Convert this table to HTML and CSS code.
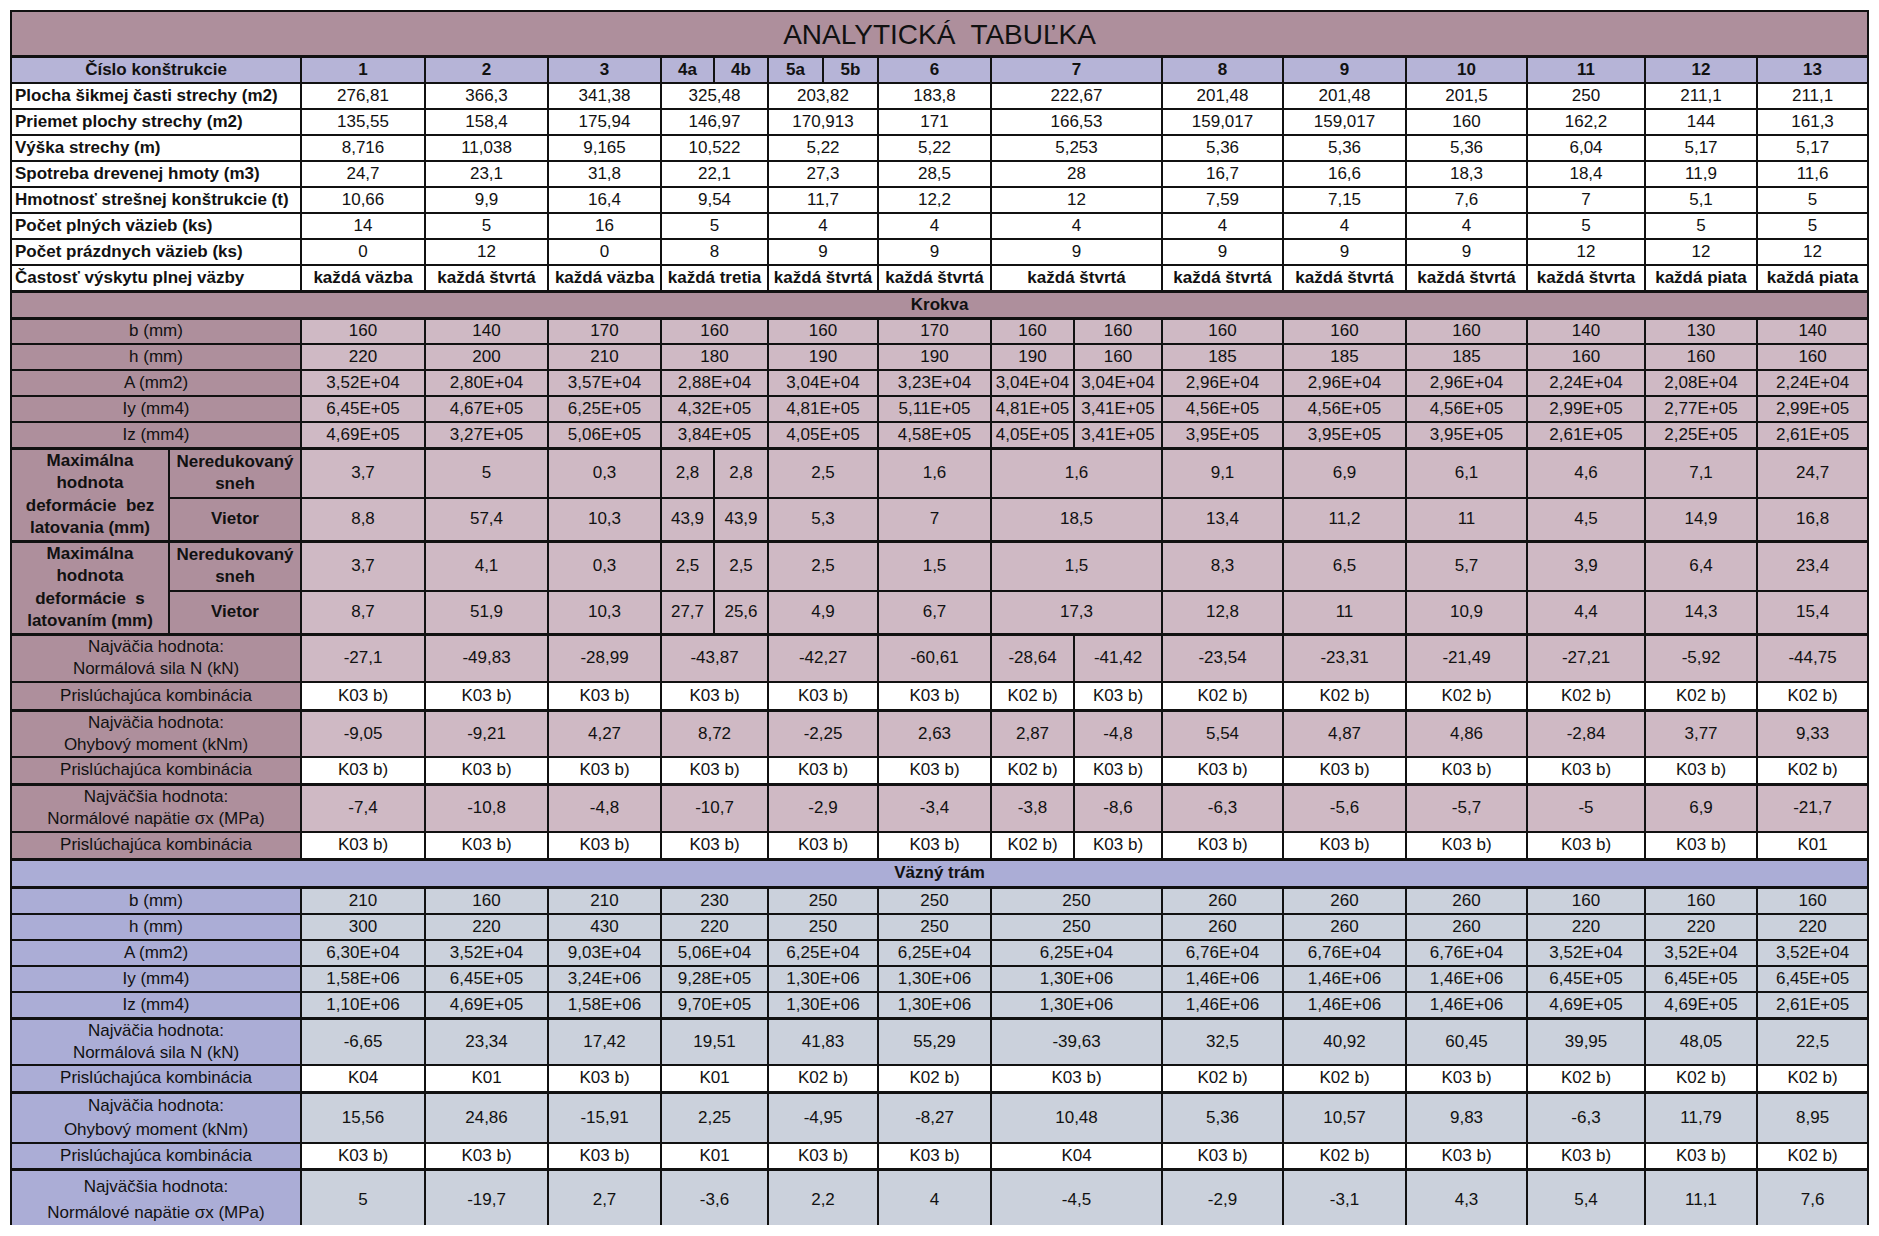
FILE: index.html
```html
<!DOCTYPE html>
<html lang="sk">
<head>
<meta charset="utf-8">
<title>Analytická tabuľka</title>
<link rel="stylesheet" href="styles.css">
</head>
<body>
<div class="page">
<table class="sheet">
<colgroup>
<col class="c158"><col class="c132"><col class="c124"><col class="c123"><col class="c113"><col class="c53"><col class="c54"><col class="c55"><col class="c55"><col class="c113"><col class="c83"><col class="c88"><col class="c121"><col class="c123"><col class="c121"><col class="c118"><col class="c112"><col class="c111">
</colgroup>
<tbody>
<tr class="title h45 thick"><td colspan="18">ANALYTICKÁ&nbsp; TABUĽKA</td></tr>
<tr class="hdr h27"><td colspan="2">Číslo konštrukcie</td><td>1</td><td>2</td><td>3</td><td class="split">4a</td><td>4b</td><td class="split">5a</td><td>5b</td><td>6</td><td colspan="2">7</td><td>8</td><td>9</td><td>10</td><td>11</td><td>12</td><td>13</td></tr>

<tr class="top h26"><td colspan="2" class="ll">Plocha šikmej časti strechy (m2)</td><td>276,81</td><td>366,3</td><td>341,38</td><td colspan="2">325,48</td><td colspan="2">203,82</td><td>183,8</td><td colspan="2">222,67</td><td>201,48</td><td>201,48</td><td>201,5</td><td>250</td><td>211,1</td><td>211,1</td></tr>
<tr class="top h26"><td colspan="2" class="ll">Priemet plochy strechy (m2)</td><td>135,55</td><td>158,4</td><td>175,94</td><td colspan="2">146,97</td><td colspan="2">170,913</td><td>171</td><td colspan="2">166,53</td><td>159,017</td><td>159,017</td><td>160</td><td>162,2</td><td>144</td><td>161,3</td></tr>
<tr class="top h26"><td colspan="2" class="ll">Výška strechy (m)</td><td>8,716</td><td>11,038</td><td>9,165</td><td colspan="2">10,522</td><td colspan="2">5,22</td><td>5,22</td><td colspan="2">5,253</td><td>5,36</td><td>5,36</td><td>5,36</td><td>6,04</td><td>5,17</td><td>5,17</td></tr>
<tr class="top h26"><td colspan="2" class="ll">Spotreba drevenej hmoty (m3)</td><td>24,7</td><td>23,1</td><td>31,8</td><td colspan="2">22,1</td><td colspan="2">27,3</td><td>28,5</td><td colspan="2">28</td><td>16,7</td><td>16,6</td><td>18,3</td><td>18,4</td><td>11,9</td><td>11,6</td></tr>
<tr class="top h26"><td colspan="2" class="ll">Hmotnosť strešnej konštrukcie (t)</td><td>10,66</td><td>9,9</td><td>16,4</td><td colspan="2">9,54</td><td colspan="2">11,7</td><td>12,2</td><td colspan="2">12</td><td>7,59</td><td>7,15</td><td>7,6</td><td>7</td><td>5,1</td><td>5</td></tr>
<tr class="top h26"><td colspan="2" class="ll">Počet plných väzieb (ks)</td><td>14</td><td>5</td><td>16</td><td colspan="2">5</td><td colspan="2">4</td><td>4</td><td colspan="2">4</td><td>4</td><td>4</td><td>4</td><td>5</td><td>5</td><td>5</td></tr>
<tr class="top h26"><td colspan="2" class="ll">Počet prázdnych väzieb (ks)</td><td>0</td><td>12</td><td>0</td><td colspan="2">8</td><td colspan="2">9</td><td>9</td><td colspan="2">9</td><td>9</td><td>9</td><td>9</td><td>12</td><td>12</td><td>12</td></tr>
<tr class="top bold h26 thick"><td colspan="2" class="ll">Častosť výskytu plnej väzby</td><td>každá väzba</td><td>každá štvrtá</td><td>každá väzba</td><td colspan="2">každá tretia</td><td colspan="2">každá štvrtá</td><td>každá štvrtá</td><td colspan="2">každá štvrtá</td><td>každá štvrtá</td><td>každá štvrtá</td><td>každá štvrtá</td><td>každá štvrta</td><td>každá piata</td><td>každá piata</td></tr>

<tr class="sec kr h27 thick"><td colspan="18">Krokva</td></tr>
<tr class="kr h26"><td colspan="2" class="lab">b (mm)</td><td>160</td><td>140</td><td>170</td><td colspan="2">160</td><td colspan="2">160</td><td>170</td><td>160</td><td>160</td><td>160</td><td>160</td><td>160</td><td>140</td><td>130</td><td>140</td></tr>
<tr class="kr h26"><td colspan="2" class="lab">h (mm)</td><td>220</td><td>200</td><td>210</td><td colspan="2">180</td><td colspan="2">190</td><td>190</td><td>190</td><td>160</td><td>185</td><td>185</td><td>185</td><td>160</td><td>160</td><td>160</td></tr>
<tr class="kr h26"><td colspan="2" class="lab">A (mm2)</td><td>3,52E+04</td><td>2,80E+04</td><td>3,57E+04</td><td colspan="2">2,88E+04</td><td colspan="2">3,04E+04</td><td>3,23E+04</td><td>3,04E+04</td><td>3,04E+04</td><td>2,96E+04</td><td>2,96E+04</td><td>2,96E+04</td><td>2,24E+04</td><td>2,08E+04</td><td>2,24E+04</td></tr>
<tr class="kr h26"><td colspan="2" class="lab">Iy (mm4)</td><td>6,45E+05</td><td>4,67E+05</td><td>6,25E+05</td><td colspan="2">4,32E+05</td><td colspan="2">4,81E+05</td><td>5,11E+05</td><td>4,81E+05</td><td>3,41E+05</td><td>4,56E+05</td><td>4,56E+05</td><td>4,56E+05</td><td>2,99E+05</td><td>2,77E+05</td><td>2,99E+05</td></tr>
<tr class="kr h26 thick"><td colspan="2" class="lab">Iz (mm4)</td><td>4,69E+05</td><td>3,27E+05</td><td>5,06E+05</td><td colspan="2">3,84E+05</td><td colspan="2">4,05E+05</td><td>4,58E+05</td><td>4,05E+05</td><td>3,41E+05</td><td>3,95E+05</td><td>3,95E+05</td><td>3,95E+05</td><td>2,61E+05</td><td>2,25E+05</td><td>2,61E+05</td></tr>

<tr class="kr h50"><td rowspan="2" class="lab def thickb"><div class="clip">Maximálna<br>hodnota<br>deformácie&nbsp; bez<br>latovania (mm)</div></td><td class="lab def2">Neredukovaný<br>sneh</td><td>3,7</td><td>5</td><td>0,3</td><td class="split">2,8</td><td>2,8</td><td colspan="2">2,5</td><td>1,6</td><td colspan="2">1,6</td><td>9,1</td><td>6,9</td><td>6,1</td><td>4,6</td><td>7,1</td><td>24,7</td></tr>
<tr class="kr h43 thick"><td class="lab def2">Vietor</td><td>8,8</td><td>57,4</td><td>10,3</td><td class="split">43,9</td><td>43,9</td><td colspan="2">5,3</td><td>7</td><td colspan="2">18,5</td><td>13,4</td><td>11,2</td><td>11</td><td>4,5</td><td>14,9</td><td>16,8</td></tr>
<tr class="kr h50"><td rowspan="2" class="lab def thickb"><div class="clip">Maximálna<br>hodnota<br>deformácie&nbsp; s<br>latovaním (mm)</div></td><td class="lab def2">Neredukovaný<br>sneh</td><td>3,7</td><td>4,1</td><td>0,3</td><td class="split">2,5</td><td>2,5</td><td colspan="2">2,5</td><td>1,5</td><td colspan="2">1,5</td><td>8,3</td><td>6,5</td><td>5,7</td><td>3,9</td><td>6,4</td><td>23,4</td></tr>
<tr class="kr h43 thick"><td class="lab def2">Vietor</td><td>8,7</td><td>51,9</td><td>10,3</td><td class="split">27,7</td><td>25,6</td><td colspan="2">4,9</td><td>6,7</td><td colspan="2">17,3</td><td>12,8</td><td>11</td><td>10,9</td><td>4,4</td><td>14,3</td><td>15,4</td></tr>

<tr class="kr h48"><td colspan="2" class="lab"><div class="two">Najväčia hodnota:<br>Normálová sila N (kN)</div></td><td>-27,1</td><td>-49,83</td><td>-28,99</td><td colspan="2">-43,87</td><td colspan="2">-42,27</td><td>-60,61</td><td>-28,64</td><td>-41,42</td><td>-23,54</td><td>-23,31</td><td>-21,49</td><td>-27,21</td><td>-5,92</td><td>-44,75</td></tr>
<tr class="kr comb h28 thick"><td colspan="2" class="lab">Prislúchajúca kombinácia</td><td>K03 b)</td><td>K03 b)</td><td>K03 b)</td><td colspan="2">K03 b)</td><td colspan="2">K03 b)</td><td>K03 b)</td><td>K02 b)</td><td>K03 b)</td><td>K02 b)</td><td>K02 b)</td><td>K02 b)</td><td>K02 b)</td><td>K02 b)</td><td>K02 b)</td></tr>
<tr class="kr h47"><td colspan="2" class="lab"><div class="two">Najväčia hodnota:<br>Ohybový moment (kNm)</div></td><td>-9,05</td><td>-9,21</td><td>4,27</td><td colspan="2">8,72</td><td colspan="2">-2,25</td><td>2,63</td><td>2,87</td><td>-4,8</td><td>5,54</td><td>4,87</td><td>4,86</td><td>-2,84</td><td>3,77</td><td>9,33</td></tr>
<tr class="kr comb h27 thick"><td colspan="2" class="lab">Prislúchajúca kombinácia</td><td>K03 b)</td><td>K03 b)</td><td>K03 b)</td><td colspan="2">K03 b)</td><td colspan="2">K03 b)</td><td>K03 b)</td><td>K02 b)</td><td>K03 b)</td><td>K03 b)</td><td>K03 b)</td><td>K03 b)</td><td>K03 b)</td><td>K03 b)</td><td>K02 b)</td></tr>
<tr class="kr h48"><td colspan="2" class="lab"><div class="two">Najväčšia hodnota:<br>Normálové napätie σx (MPa)</div></td><td>-7,4</td><td>-10,8</td><td>-4,8</td><td colspan="2">-10,7</td><td colspan="2">-2,9</td><td>-3,4</td><td>-3,8</td><td>-8,6</td><td>-6,3</td><td>-5,6</td><td>-5,7</td><td>-5</td><td>6,9</td><td>-21,7</td></tr>
<tr class="kr comb h27 thick"><td colspan="2" class="lab">Prislúchajúca kombinácia</td><td>K03 b)</td><td>K03 b)</td><td>K03 b)</td><td colspan="2">K03 b)</td><td colspan="2">K03 b)</td><td>K03 b)</td><td>K02 b)</td><td>K03 b)</td><td>K03 b)</td><td>K03 b)</td><td>K03 b)</td><td>K03 b)</td><td>K03 b)</td><td>K01</td></tr>

<tr class="sec vz h28 thick"><td colspan="18">Väzný trám</td></tr>
<tr class="vz h27"><td colspan="2" class="lab">b (mm)</td><td>210</td><td>160</td><td>210</td><td colspan="2">230</td><td colspan="2">250</td><td>250</td><td colspan="2">250</td><td>260</td><td>260</td><td>260</td><td>160</td><td>160</td><td>160</td></tr>
<tr class="vz h26"><td colspan="2" class="lab">h (mm)</td><td>300</td><td>220</td><td>430</td><td colspan="2">220</td><td colspan="2">250</td><td>250</td><td colspan="2">250</td><td>260</td><td>260</td><td>260</td><td>220</td><td>220</td><td>220</td></tr>
<tr class="vz h26"><td colspan="2" class="lab">A (mm2)</td><td>6,30E+04</td><td>3,52E+04</td><td>9,03E+04</td><td colspan="2">5,06E+04</td><td colspan="2">6,25E+04</td><td>6,25E+04</td><td colspan="2">6,25E+04</td><td>6,76E+04</td><td>6,76E+04</td><td>6,76E+04</td><td>3,52E+04</td><td>3,52E+04</td><td>3,52E+04</td></tr>
<tr class="vz h26"><td colspan="2" class="lab">Iy (mm4)</td><td>1,58E+06</td><td>6,45E+05</td><td>3,24E+06</td><td colspan="2">9,28E+05</td><td colspan="2">1,30E+06</td><td>1,30E+06</td><td colspan="2">1,30E+06</td><td>1,46E+06</td><td>1,46E+06</td><td>1,46E+06</td><td>6,45E+05</td><td>6,45E+05</td><td>6,45E+05</td></tr>
<tr class="vz h26 thick"><td colspan="2" class="lab">Iz (mm4)</td><td>1,10E+06</td><td>4,69E+05</td><td>1,58E+06</td><td colspan="2">9,70E+05</td><td colspan="2">1,30E+06</td><td>1,30E+06</td><td colspan="2">1,30E+06</td><td>1,46E+06</td><td>1,46E+06</td><td>1,46E+06</td><td>4,69E+05</td><td>4,69E+05</td><td>2,61E+05</td></tr>
<tr class="vz h47"><td colspan="2" class="lab"><div class="two">Najväčia hodnota:<br>Normálová sila N (kN)</div></td><td>-6,65</td><td>23,34</td><td>17,42</td><td colspan="2">19,51</td><td colspan="2">41,83</td><td>55,29</td><td colspan="2">-39,63</td><td>32,5</td><td>40,92</td><td>60,45</td><td>39,95</td><td>48,05</td><td>22,5</td></tr>
<tr class="vz comb h27 thick"><td colspan="2" class="lab">Prislúchajúca kombinácia</td><td>K04</td><td>K01</td><td>K03 b)</td><td colspan="2">K01</td><td colspan="2">K02 b)</td><td>K02 b)</td><td colspan="2">K03 b)</td><td>K02 b)</td><td>K02 b)</td><td>K03 b)</td><td>K02 b)</td><td>K02 b)</td><td>K02 b)</td></tr>
<tr class="vz h51"><td colspan="2" class="lab"><div class="two">Najväčia hodnota:<br>Ohybový moment (kNm)</div></td><td>15,56</td><td>24,86</td><td>-15,91</td><td colspan="2">2,25</td><td colspan="2">-4,95</td><td>-8,27</td><td colspan="2">10,48</td><td>5,36</td><td>10,57</td><td>9,83</td><td>-6,3</td><td>11,79</td><td>8,95</td></tr>
<tr class="vz comb h26 thick"><td colspan="2" class="lab">Prislúchajúca kombinácia</td><td>K03 b)</td><td>K03 b)</td><td>K03 b)</td><td colspan="2">K01</td><td colspan="2">K03 b)</td><td>K03 b)</td><td colspan="2">K04</td><td>K03 b)</td><td>K02 b)</td><td>K03 b)</td><td>K03 b)</td><td>K03 b)</td><td>K02 b)</td></tr>
<tr class="vz h62"><td colspan="2" class="lab"><div class="two">Najväčšia hodnota:<br>Normálové napätie σx (MPa)</div></td><td>5</td><td>-19,7</td><td>2,7</td><td colspan="2">-3,6</td><td colspan="2">2,2</td><td>4</td><td colspan="2">-4,5</td><td>-2,9</td><td>-3,1</td><td>4,3</td><td>5,4</td><td>11,1</td><td>7,6</td></tr>
</tbody>
</table>
</div>
</body>
</html>
```

FILE: styles.css
```css
:root {
  --mauve: #ae8f9c;
  --mauve-light: #cfb9c4;
  --lav-head: #b6b4d7;
  --lav: #abadd6;
  --blue-grey: #cbd1dc;
  --line: #111;
}

html, body {
  margin: 0;
  padding: 0;
  background: #fff;
}

.page {
  box-sizing: border-box;
  height: 1225px;
  overflow: hidden;
  padding: 10px 0 0 10px;
}

.sheet {
  border-collapse: collapse;
  table-layout: fixed;
  width: 1857px;
  font-family: "Liberation Sans", Arial, sans-serif;
  font-size: 17px;
  color: #111;
}

.c158 { width: 158px; }
.c132 { width: 132px; }
.c124 { width: 124px; }
.c123 { width: 123px; }
.c113 { width: 113px; }
.c53 { width: 53px; }
.c54 { width: 54px; }
.c55 { width: 55px; }
.c83 { width: 83px; }
.c88 { width: 88px; }
.c121 { width: 121px; }
.c118 { width: 118px; }
.c112 { width: 112px; }
.c111 { width: 111px; }

.sheet td {
  border: 2px solid var(--line);
  padding: 0 2px;
  text-align: center;
  vertical-align: middle;
  white-space: nowrap;
  overflow: hidden;
  line-height: 22px;
  background: #fff;
}

.h26 { height: 26px; }
.h27 { height: 27px; }
.h28 { height: 28px; }
.h43 { height: 43px; }
.h45 { height: 45px; }
.h47 { height: 47px; }
.h48 { height: 48px; }
.h50 { height: 50px; }
.h51 { height: 51px; }
.h62 { height: 62px; }

.thick td { border-bottom-width: 3px; }
.sheet td.thickb { border-bottom-width: 3px; }

.title td {
  background: var(--mauve);
  font-size: 28px;
  line-height: 38px;
  padding-top: 4px;
}

.hdr td {
  background: var(--lav-head);
  font-weight: bold;
}

.sheet .split { border-right-width: 1px; }

.sheet td.ll {
  text-align: left;
  font-weight: bold;
  padding-left: 3px;
}

.bold td { font-weight: bold; }

.sec td { font-weight: bold; }
.sec.kr td { background: var(--mauve); }
.sec.vz td { background: var(--lav); }

.kr td { background: var(--mauve-light); }
.kr td.lab { background: var(--mauve); }

.vz td { background: var(--blue-grey); }
.vz td.lab { background: var(--lav); }

.sheet .comb td { background: #fff; }
.sheet .kr.comb td.lab { background: var(--mauve); }
.sheet .vz.comb td.lab { background: var(--lav); }

.def, .def2 { font-weight: bold; }

.clip {
  height: 90px;
  overflow: hidden;
  display: flex;
  flex-direction: column;
  justify-content: center;
  line-height: 22.5px;
  white-space: nowrap;
}

.def2 { line-height: 24px; }

.two {
  height: 44px;
  overflow: hidden;
  display: flex;
  flex-direction: column;
  justify-content: center;
  line-height: 22px;
}

.h51 .two { height: 48px; line-height: 24px; }
.h62 .two { height: 58px; line-height: 26px; }
```
